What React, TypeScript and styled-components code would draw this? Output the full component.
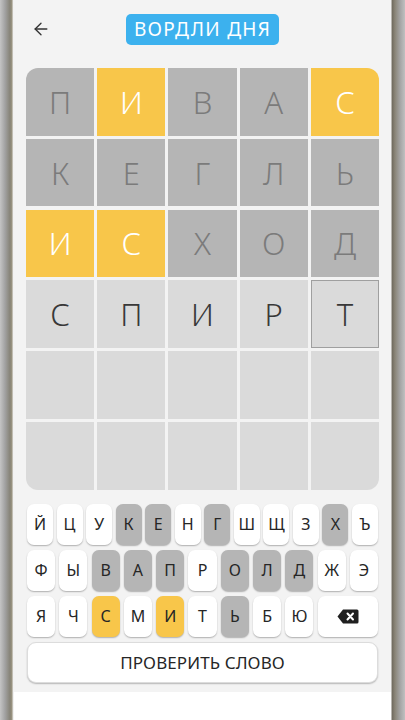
import styled, { createGlobalStyle } from 'styled-components';
import { ArrowLeft } from 'lucide-react';

type TileState = 'absent' | 'present' | 'typed' | 'empty';
type KeyState = 'absent' | 'present' | 'idle';

const GlobalStyle = createGlobalStyle`
  html, body {
    margin: 0;
    padding: 0;
    height: 100%;
  }
  body {
    font-family: 'Noto Sans', 'Open Sans', sans-serif;
    background: #ffffff;
  }
`;

const Device = styled.div`
  display: flex;
  width: 405px;
  height: 720px;
  overflow: hidden;
`;

const BezelLeft = styled.div`
  width: 14px;
  flex-shrink: 0;
  background: linear-gradient(
    to right,
    #c4c4c4 0px,
    #a2a2a2 5px,
    #868377 10px,
    #9c9580 12px,
    #e4e4e4 13px,
    #ffffff 14px
  );
`;

const BezelRight = styled.div`
  width: 14px;
  flex-shrink: 0;
  background: linear-gradient(
    to right,
    #ffffff 0px,
    #6f6a5e 1px,
    #8a8578 4px,
    #a4a4a4 9px,
    #c0c0c0 14px
  );
`;

const Screen = styled.main`
  flex: 1;
  display: flex;
  flex-direction: column;
  background: #ffffff;
`;

const Content = styled.div`
  background: #f3f3f3;
  padding: 14px 12px 9px 12px;
  display: flex;
  flex-direction: column;
`;

const Header = styled.header`
  position: relative;
  height: 31px;
  display: flex;
  align-items: center;
  justify-content: center;
`;

const BackButton = styled.button`
  position: absolute;
  left: 5px;
  top: 5px;
  border: none;
  background: transparent;
  padding: 0;
  display: flex;
  color: #333333;
`;

const TitleBadge = styled.h1`
  margin: 0;
  height: 31px;
  padding: 0 8px;
  border-radius: 5px;
  background: #3cb1ee;
  color: #ffffff;
  font-size: 19px;
  font-weight: 400;
  letter-spacing: 1.3px;
  line-height: 31px;
`;

const Board = styled.div`
  margin-top: 23px;
  display: grid;
  grid-template-columns: repeat(5, 1fr);
  grid-auto-rows: 67.6px;
  gap: 3.2px;
  border-radius: 12px;
  overflow: hidden;
`;

const tileBg: Record<TileState, string> = {
  absent: '#b5b5b5',
  present: '#f8c64a',
  typed: '#dadada',
  empty: '#dadada',
};

const tileFg: Record<TileState, string> = {
  absent: '#7b7b7b',
  present: '#ffffff',
  typed: '#383838',
  empty: '#383838',
};

const Tile = styled.div<{ $state: TileState; $active?: boolean }>`
  box-sizing: border-box;
  display: flex;
  align-items: center;
  justify-content: center;
  background: ${({ $state }) => tileBg[$state]};
  color: ${({ $state }) => tileFg[$state]};
  border: ${({ $active }) => ($active ? '1.5px solid #9f9f9f' : 'none')};
  font-size: 31px;
  font-weight: 300;
`;

const Keyboard = styled.div`
  margin-top: 14px;
  padding: 0 1px;
  display: flex;
  flex-direction: column;
  gap: 4.5px;
`;

const KeyRow = styled.div<{ $cols: number; $gap: number }>`
  display: grid;
  grid-template-columns: repeat(${({ $cols }) => $cols}, 1fr);
  gap: ${({ $gap }) => $gap}px;
  height: 41.5px;
`;

const keyBg: Record<KeyState, string> = {
  absent: '#b5b5b5',
  present: '#f8c64a',
  idle: '#ffffff',
};

const Key = styled.button<{ $state: KeyState; $span?: number }>`
  grid-column: span ${({ $span }) => $span ?? 1};
  border: none;
  border-radius: 7px;
  padding: 0;
  background: ${({ $state }) => keyBg[$state]};
  box-shadow: 0 1px 1.5px rgba(0, 0, 0, 0.28);
  color: #262626;
  font-family: 'Noto Sans', sans-serif;
  font-size: 16px;
  display: flex;
  align-items: center;
  justify-content: center;
`;

const CheckButton = styled.button`
  margin-top: 4.5px;
  margin-left: 1px;
  margin-right: 1px;
  height: 41.5px;
  border: 1px solid #dcdcdc;
  border-radius: 9px;
  background: #ffffff;
  box-shadow: 0 1px 1.5px rgba(0, 0, 0, 0.25);
  color: #262626;
  font-family: 'Noto Sans', sans-serif;
  font-size: 17px;
  letter-spacing: 0.1px;
`;

const board: { letter: string; state: TileState }[][] = [
  [
    { letter: 'П', state: 'absent' },
    { letter: 'И', state: 'present' },
    { letter: 'В', state: 'absent' },
    { letter: 'А', state: 'absent' },
    { letter: 'С', state: 'present' },
  ],
  [
    { letter: 'К', state: 'absent' },
    { letter: 'Е', state: 'absent' },
    { letter: 'Г', state: 'absent' },
    { letter: 'Л', state: 'absent' },
    { letter: 'Ь', state: 'absent' },
  ],
  [
    { letter: 'И', state: 'present' },
    { letter: 'С', state: 'present' },
    { letter: 'Х', state: 'absent' },
    { letter: 'О', state: 'absent' },
    { letter: 'Д', state: 'absent' },
  ],
  [
    { letter: 'С', state: 'typed' },
    { letter: 'П', state: 'typed' },
    { letter: 'И', state: 'typed' },
    { letter: 'Р', state: 'typed' },
    { letter: 'Т', state: 'typed' },
  ],
  Array.from({ length: 5 }, () => ({ letter: '', state: 'empty' as TileState })),
  Array.from({ length: 5 }, () => ({ letter: '', state: 'empty' as TileState })),
];

const absentKeys = new Set(['К', 'Е', 'Г', 'Х', 'В', 'А', 'П', 'О', 'Л', 'Д', 'Ь']);
const presentKeys = new Set(['С', 'И']);

const keyState = (k: string): KeyState =>
  presentKeys.has(k) ? 'present' : absentKeys.has(k) ? 'absent' : 'idle';

const rows = [
  ['Й', 'Ц', 'У', 'К', 'Е', 'Н', 'Г', 'Ш', 'Щ', 'З', 'Х', 'Ъ'],
  ['Ф', 'Ы', 'В', 'А', 'П', 'Р', 'О', 'Л', 'Д', 'Ж', 'Э'],
  ['Я', 'Ч', 'С', 'М', 'И', 'Т', 'Ь', 'Б', 'Ю'],
];

const BackspaceIcon = () => (
  <svg width="22" height="15" viewBox="0 0 22 15">
    <path d="M6 0.5H20a1.5 1.5 0 0 1 1.5 1.5v11a1.5 1.5 0 0 1-1.5 1.5H6L0.5 7.5Z" fill="#1f1f1f" />
    <path d="M10.5 4.5l5.5 6M16 4.5l-5.5 6" stroke="#ffffff" strokeWidth="2" strokeLinecap="round" />
  </svg>
);

const App = () => {
  return (
    <>
      <GlobalStyle />
      <Device>
        <BezelLeft />
        <Screen>
          <Content>
            <Header>
              <BackButton aria-label="Назад">
                <ArrowLeft size={20} strokeWidth={1.6} />
              </BackButton>
              <TitleBadge>ВОРДЛИ ДНЯ</TitleBadge>
            </Header>

            <Board>
              {board.map((row, r) =>
                row.map((cell, c) => (
                  <Tile key={`${r}-${c}`} $state={cell.state} $active={r === 3 && c === 4}>
                    {cell.letter}
                  </Tile>
                ))
              )}
            </Board>

            <Keyboard>
              <KeyRow $cols={12} $gap={3.6}>
                {rows[0].map((k) => (
                  <Key key={k} $state={keyState(k)}>{k}</Key>
                ))}
              </KeyRow>
              <KeyRow $cols={11} $gap={4.3}>
                {rows[1].map((k) => (
                  <Key key={k} $state={keyState(k)}>{k}</Key>
                ))}
              </KeyRow>
              <KeyRow $cols={11} $gap={4.3}>
                {rows[2].map((k) => (
                  <Key key={k} $state={keyState(k)}>{k}</Key>
                ))}
                <Key $state="idle" $span={2} aria-label="Стереть">
                  <BackspaceIcon />
                </Key>
              </KeyRow>
            </Keyboard>

            <CheckButton>ПРОВЕРИТЬ СЛОВО</CheckButton>
          </Content>
        </Screen>
        <BezelRight />
      </Device>
    </>
  );
};

export default App;
